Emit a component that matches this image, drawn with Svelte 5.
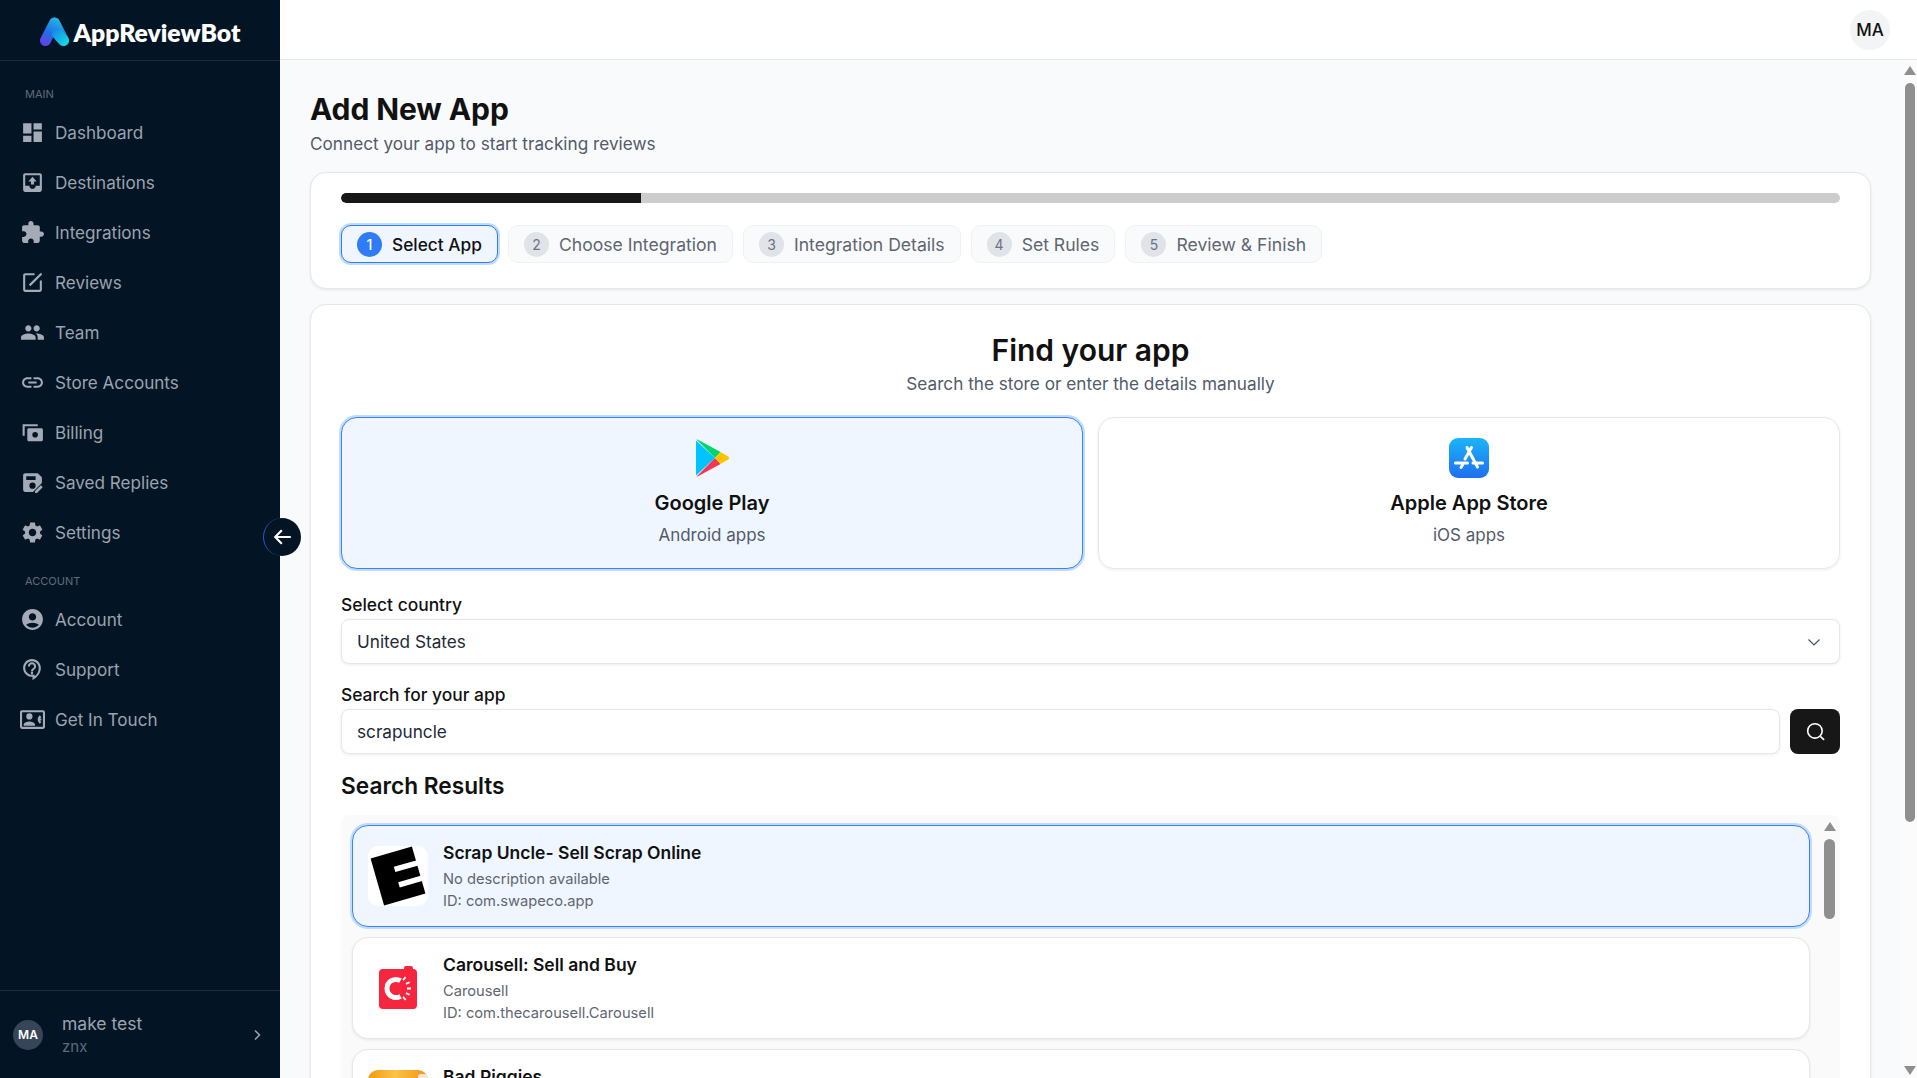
<script>
  const mainNav = [
    { label: 'Dashboard', icon: 'M3 13h8V3H3v10zm0 8h8v-6H3v6zm10 0h8V11h-8v10zm0-18v6h8V3h-8z' },
    { label: 'Destinations', icon: 'M19 3H5c-1.1 0-2 .9-2 2v14c0 1.1.9 2 2 2h14c1.1 0 2-.9 2-2V5c0-1.1-.9-2-2-2zM5 5h14v10h-4c0 1.66-1.34 3-3 3s-3-1.34-3-3H5V5zm7 1.5L8 11h2.5v3h3v-3H16l-4-4.500z' },
    { label: 'Integrations', icon: 'M20.500 11H19V7c0-1.100-.9-2-2-2h-4V3.500C13 2.120 11.880 1 10.500 1S8 2.120 8 3.500V5H4c-1.100 0-1.990.9-1.990 2v3.800H3.500c1.490 0 2.700 1.210 2.700 2.700s-1.210 2.700-2.700 2.700H2V20c0 1.100.9 2 2 2h3.800v-1.500c0-1.490 1.210-2.700 2.700-2.700 1.490 0 2.700 1.210 2.700 2.700V22H17c1.100 0 2-.9 2-2v-4h1.500c1.380 0 2.500-1.120 2.500-2.500S21.880 11 20.500 11z' },
    { label: 'Reviews', icon: 'M19 19H5V5h9V3H5c-1.110 0-2 .9-2 2v14c0 1.100.89 2 2 2h14c1.100 0 2-.9 2-2v-9h-2v9zM19.500 3l-11 11 1.500 1.500 11-11V3h-1.500z' },
    { label: 'Team', icon: 'M16 11c1.660 0 2.990-1.340 2.990-3S17.660 5 16 5c-1.660 0-3 1.340-3 3s1.340 3 3 3zm-8 0c1.660 0 2.990-1.340 2.990-3S9.660 5 8 5C6.340 5 5 6.340 5 8s1.340 3 3 3zm0 2c-2.330 0-7 1.170-7 3.500V19h14v-2.500c0-2.330-4.670-3.500-7-3.500zm8 0c-.29 0-.62.020-.97.050 1.160.84 1.970 1.970 1.970 3.450V19h6v-2.500c0-2.330-4.670-3.500-7-3.500z' },
    { label: 'Store Accounts', icon: 'M3.900 12c0-1.710 1.390-3.100 3.100-3.100h4V7H7c-2.760 0-5 2.240-5 5s2.240 5 5 5h4v-1.900H7c-1.710 0-3.100-1.390-3.100-3.100zM8 13h8v-2H8v2zm9-6h-4v1.900h4c1.710 0 3.100 1.390 3.100 3.100s-1.390 3.100-3.100 3.100h-4V17h4c2.760 0 5-2.240 5-5s-2.240-5-5-5z' },
    { label: 'Billing', icon: 'M2.500 4H17v2H4.500v9h-2V4zM8.500 8h12c.83 0 1.500.67 1.500 1.500V19c0 .83-.67 1.500-1.500 1.500h-12C7.670 20.500 7 19.830 7 19V9.500C7 8.670 7.670 8 8.500 8zm6 3.500a2.700 2.700 0 1 0 0 5.400 2.700 2.700 0 0 0 0-5.400z' },
    { label: 'Saved Replies', icon: 'M17 3H5c-1.100 0-2 .9-2 2v14c0 1.100.9 2 2 2h7.500l8.500-8.500V7l-4-4zM6 6h9v3.500H6V6zm6 12a3 3 0 1 1 0-6 3 3 0 0 1 0 6zM14.500 22v-1.800l5.500-5.500 1.800 1.800-5.500 5.500h-1.800z' },
    { label: 'Settings', icon: 'M19.140 12.940c.04-.3.06-.61.06-.94 0-.32-.02-.64-.07-.94l2.030-1.580c.18-.14.23-.41.12-.61l-1.920-3.320c-.12-.22-.37-.29-.59-.22l-2.390.96c-.5-.38-1.030-.7-1.620-.94l-.36-2.540c-.04-.24-.24-.41-.48-.41h-3.840c-.24 0-.43.17-.47.41l-.36 2.540c-.59.24-1.130.57-1.620.94l-2.390-.96c-.22-.08-.47 0-.59.22L2.740 8.870c-.12.21-.08.47.12.61l2.030 1.580c-.05.3-.09.63-.09.94s.02.64.07.94l-2.030 1.580c-.18.14-.23.41-.12.61l1.920 3.320c.12.22.37.29.59.22l2.390-.96c.5.38 1.030.7 1.620.94l.36 2.540c.05.24.24.41.48.41h3.840c.24 0 .44-.17.47-.41l.36-2.540c.59-.24 1.130-.56 1.620-.94l2.390.96c.22.08.47 0 .59-.22l1.920-3.320c.12-.22.07-.47-.12-.61l-2.010-1.580zM12 15.600c-1.980 0-3.600-1.620-3.600-3.600s1.620-3.600 3.600-3.600 3.600 1.620 3.600 3.600-1.620 3.600-3.600 3.600z' }
  ];

  const accountNav = [
    { label: 'Account', icon: 'M12 2C6.480 2 2 6.480 2 12s4.480 10 10 10 10-4.480 10-10S17.520 2 12 2zm0 4c1.930 0 3.500 1.570 3.500 3.500S13.930 13 12 13s-3.500-1.570-3.500-3.500S10.070 6 12 6zm0 14c-2.030 0-4.430-.82-6.140-2.880C7.550 15.800 9.680 15 12 15s4.450.8 6.140 2.120C16.430 19.180 14.030 20 12 20z' },
    { label: 'Support', icon: 'M11.500 2C6.810 2 3 5.810 3 10.500S6.810 19 11.500 19h.5v3c4.860-2.340 8-7 8-11.500C20 5.810 16.190 2 11.500 2zm2.500 16.550V17h-2.500C7.910 17 5 14.090 5 10.500S7.910 4 11.500 4 18 6.910 18 10.500c0 3.300-1.470 6.170-4 8.050zM10.500 14.500h2v2h-2v-2zm1-9.500C9.290 5 7.500 6.790 7.500 9h2c0-1.100.9-2 2-2s2 .9 2 2c0 2-3 1.750-3 5h2c0-2.250 3-2.500 3-5 0-2.210-1.790-4-4-4z' },
    { label: 'Get In Touch', icon: 'M22 3H2C.9 3 0 3.900 0 5v14c0 1.100.9 2 2 2h20c1.100 0 2-.9 2-2V5c0-1.100-.9-2-2-2zm0 16H2V5h20v14zM9 12a3 3 0 1 0 0-6 3 3 0 0 0 0 6zM3.500 18h11v-1c0-2-3.700-3.100-5.500-3.100S3.500 15 3.500 17v1zM19 8c-1.300 1.300-2 2.600-2 4s.7 2.700 2 4l1.500-1.500c-.7-.6-1-1.200-1.500-1.500h1.500v-2H19c.5-.3.800-.9 1.500-1.500L19 8z' }
  ];

  const steps = ['Select App', 'Choose Integration', 'Integration Details', 'Set Rules', 'Review & Finish'];
</script>

<div class="app">
  <aside class="sidebar">
    <div class="brand">
      <svg class="logo" viewBox="0 0 30 30" aria-hidden="true">
        <defs>
          <linearGradient id="lg1" gradientUnits="userSpaceOnUse" x1="4" y1="29" x2="17" y2="2">
            <stop offset="0" stop-color="#6a3be4" />
            <stop offset="0.5" stop-color="#1f72e6" />
            <stop offset="1" stop-color="#22b6e6" />
          </linearGradient>
          <linearGradient id="lg2" gradientUnits="userSpaceOnUse" x1="12" y1="12" x2="28" y2="28">
            <stop offset="0" stop-color="#1c7fe6" />
            <stop offset="1" stop-color="#10e2e0" />
          </linearGradient>
        </defs>
        <path d="M14.500 6 5.500 23.500M14.500 6l9 17.500" fill="none" stroke="url(#lg1)" stroke-width="11" stroke-linecap="round" />
        <path d="M17.500 17 23.500 23.500" fill="none" stroke="url(#lg2)" stroke-width="11" stroke-linecap="round" />
      </svg>
      <span class="brand-name">AppReviewBot</span>
    </div>

    <nav class="nav">
      <div class="nav-title">MAIN</div>
      {#each mainNav as item}
        <div class="nav-item">
          <svg class="nav-icon" viewBox="0 0 24 24" aria-hidden="true"><path d={item.icon} fill-rule="evenodd" /></svg>
          <span>{item.label}</span>
        </div>
      {/each}
      <div class="nav-title second">ACCOUNT</div>
      {#each accountNav as item}
        <div class="nav-item">
          <svg class="nav-icon" viewBox="0 0 24 24" aria-hidden="true"><path d={item.icon} fill-rule="evenodd" /></svg>
          <span>{item.label}</span>
        </div>
      {/each}
    </nav>

    <div class="user">
      <div class="user-avatar">MA</div>
      <div class="user-text">
        <div class="user-name">make test</div>
        <div class="user-org">znx</div>
      </div>
      <svg class="chev" viewBox="0 0 16 16" aria-hidden="true"><path d="M6 3.500 10.500 8 6 12.500" /></svg>
    </div>

    <button class="collapse" aria-label="Collapse sidebar">
      <svg viewBox="0 0 20 20" aria-hidden="true"><path d="M16.500 10h-13M9 4.300 3.500 10 9 15.700" /></svg>
    </button>
  </aside>

  <div class="right">
    <header class="topbar"><div class="top-avatar">MA</div></header>

    <div class="scroll-wrap">
      <main class="content">
        <h1>Add New App</h1>
        <p class="lead">Connect your app to start tracking reviews</p>

        <section class="card progress-card">
          <div class="bar"><div class="bar-fill" style="width: 20%"></div></div>
          <div class="steps">
            {#each steps as step, i}
              <div class="step" class:active={i === 0}>
                <span class="num">{i + 1}</span>
                <span>{step}</span>
              </div>
            {/each}
          </div>
        </section>

        <section class="card find-card">
          <h2>Find your app</h2>
          <p class="find-sub">Search the store or enter the details manually</p>

          <div class="platforms">
            <div class="platform selected">
              <svg class="platform-icon" viewBox="0 0 40 40" aria-hidden="true">
                <path d="M4 2.500v35L23 20z" fill="#00c3ff" />
                <path d="M4.500 1.500 23 20l5.500-6L6 1.800c-.6-.4-1.100-.4-1.500-.3z" fill="#00d56e" />
                <path d="M4.500 38.500 23 20l5.500 6L6 38.200c-.6.4-1.100.4-1.500.3z" fill="#f5364e" />
                <path d="m28.500 14 7.800 4.500c1 .6 1 2.400 0 3L28.500 26 23 20z" fill="#ffc400" />
              </svg>
              <div class="platform-name">Google Play</div>
              <div class="platform-sub">Android apps</div>
            </div>
            <div class="platform">
              <svg class="platform-icon" viewBox="0 0 40 40" aria-hidden="true">
                <defs>
                  <linearGradient id="as" x1="0" y1="0" x2="0" y2="1">
                    <stop offset="0" stop-color="#1cb4f8" />
                    <stop offset="1" stop-color="#1e6ff0" />
                  </linearGradient>
                </defs>
                <rect width="40" height="40" rx="9" fill="url(#as)" />
                <path d="M18 9.500 28.500 29M22.500 9.500 16 21M12 29.500l2-3.500M6.500 25h12M24 25h9.500" stroke="#fff" stroke-width="3" stroke-linecap="round" fill="none" />
              </svg>
              <div class="platform-name">Apple App Store</div>
              <div class="platform-sub">iOS apps</div>
            </div>
          </div>

          <div class="field-label first">Select country</div>
          <div class="input select">
            <span>United States</span>
            <svg viewBox="0 0 16 16" aria-hidden="true"><path d="M2.500 5.500 8 11l5.500-5.500" /></svg>
          </div>

          <div class="field-label">Search for your app</div>
          <div class="search-row">
            <div class="input grow">scrapuncle</div>
            <button class="search-btn" aria-label="Search">
              <svg viewBox="0 0 20 20" aria-hidden="true"><circle cx="9.500" cy="9.500" r="6.300" /><path d="m14.200 14.200 3.300 3" /></svg>
            </button>
          </div>

          <h3>Search Results</h3>

          <div class="results">
            <div class="result-list">
              <div class="result selected">
                <div class="app-icon">
                  <svg viewBox="0 0 60 60" aria-hidden="true">
                    <g transform="rotate(-16 30 30)">
                      <rect x="8.500" y="5.500" width="43" height="49" fill="#000" />
                      <rect x="28.500" y="20" width="25" height="5.500" fill="#fff" />
                      <rect x="28.500" y="36" width="25" height="5.500" fill="#fff" />
                    </g>
                  </svg>
                </div>
                <div class="result-text">
                  <div class="result-title">Scrap Uncle- Sell Scrap Online</div>
                  <div class="result-line">No description available</div>
                  <div class="result-line">ID: com.swapeco.app</div>
                </div>
              </div>
              <div class="result">
                <div class="app-icon">
                  <svg viewBox="0 0 60 60" aria-hidden="true">
                    <rect x="11" y="11" width="38" height="40" rx="4" fill="#f7263f" />
                    <rect x="36" y="8" width="9" height="7" rx="2" fill="#f7263f" />
                    <path d="M32.500 22.700a9 9 0 1 0 0 15.600" fill="none" stroke="#fff" stroke-width="5" />
                    <path d="M35.100 22.100l2.500-3.100M38 25.900l3.600-1.700M39 30.500h4M38 35.100l3.600 1.700M35.100 38.900l2.500 3.100" stroke="#fff" stroke-width="1.800" fill="none" />
                  </svg>
                </div>
                <div class="result-text">
                  <div class="result-title">Carousell: Sell and Buy</div>
                  <div class="result-line">Carousell</div>
                  <div class="result-line">ID: com.thecarousell.Carousell</div>
                </div>
              </div>
              <div class="result">
                <div class="app-icon piggies">
                  <svg viewBox="0 0 60 60" aria-hidden="true">
                    <rect x="50" y="4" width="10" height="12" rx="3" fill="#f6e2dc" />
                  </svg>
                </div>
                <div class="result-text">
                  <div class="result-title">Bad Piggies</div>
                  <div class="result-line">Rovio Entertainment</div>
                  <div class="result-line">ID: com.rovio.BadPiggies</div>
                </div>
              </div>
            </div>
            <div class="scrollbar small">
              <span class="arrow up"></span>
              <span class="thumb"></span>
            </div>
          </div>
        </section>
      </main>

      <div class="scrollbar page">
        <span class="arrow up"></span>
        <span class="thumb"></span>
        <span class="arrow down"></span>
      </div>
    </div>
  </div>
</div>

<style>
  :global(body) {
    margin: 0;
    overflow: hidden;
    font-family: Inter, "Liberation Sans", sans-serif;
    color: #111;
  }

  .app {
    display: flex;
    height: 1078px;
    overflow: hidden;
    background: #f9fafb;
  }

  /* sidebar */
  .sidebar {
    position: relative;
    flex: 0 0 280px;
    display: flex;
    flex-direction: column;
    background: #031525;
  }
  .brand {
    height: 61px;
    box-sizing: border-box;
    display: flex;
    align-items: center;
    justify-content: center;
    gap: 4px;
    padding: 5px 0 0 0;
    border-bottom: 1px solid #1d2b3a;
  }
  .logo {
    width: 30px;
    height: 30px;
    margin-top: -2px;
  }
  .brand-name {
    font-family: Lato, Inter, sans-serif;
    font-size: 24.700px;
    font-weight: 800;
    color: #fff;
  }
  .nav {
    flex: 1;
    padding-top: 25px;
  }
  .nav-title {
    padding-left: 25px;
    font-size: 11px;
    line-height: 16px;
    color: #626c78;
    margin-bottom: 5px;
  }
  .nav-title.second {
    margin-top: 16px;
    margin-bottom: 5px;
  }
  .nav-item {
    height: 50px;
    display: flex;
    align-items: center;
    padding-left: 20px;
    gap: 10px;
    font-size: 17.100px;
    color: #9ca3af;
  }
  .nav-icon {
    width: 25px;
    height: 25px;
    fill: #a4abb7;
    flex: none;
  }
  .user {
    height: 88px;
    box-sizing: border-box;
    border-top: 1px solid #1d2b3a;
    display: flex;
    align-items: center;
    padding: 1px 15px 0 13px;
    gap: 19px;
  }
  .user-avatar {
    width: 30px;
    height: 30px;
    margin-top: -1px;
    border-radius: 50%;
    background: #374559;
    color: #fff;
    font-size: 12px;
    font-weight: 600;
    display: flex;
    align-items: center;
    justify-content: center;
    flex: none;
  }
  .user-text {
    flex: 1;
  }
  .user-name {
    font-size: 17.500px;
    line-height: 24px;
    color: #9ca3af;
  }
  .user-org {
    font-size: 15px;
    line-height: 22px;
    color: #5f6b7a;
  }
  .chev {
    width: 16px;
    height: 16px;
    fill: none;
    stroke: #9ca3af;
    stroke-width: 1.500;
  }
  .collapse {
    position: absolute;
    top: 518px;
    left: 263px;
    width: 38px;
    height: 38px;
    padding: 0;
    border: 0;
    border-left: 1px solid #1d5fd0;
    border-radius: 50%;
    background: #031525;
    display: flex;
    align-items: center;
    justify-content: center;
    z-index: 2;
  }
  .collapse svg {
    width: 24px;
    height: 24px;
    fill: none;
    stroke: #fff;
    stroke-width: 1.800;
  }

  /* right side */
  .right {
    flex: 1;
    min-width: 0;
    display: flex;
    flex-direction: column;
  }
  .topbar {
    height: 60px;
    box-sizing: border-box;
    flex: none;
    background: #fff;
    border-bottom: 1px solid #e5e7eb;
    display: flex;
    align-items: center;
    justify-content: flex-end;
    padding-right: 27px;
  }
  .top-avatar {
    width: 40px;
    height: 40px;
    border-radius: 50%;
    background: #f3f4f6;
    display: flex;
    align-items: center;
    justify-content: center;
    font-size: 17px;
    font-weight: 500;
    color: #111;
  }
  .scroll-wrap {
    flex: 1;
    min-height: 0;
    display: flex;
    overflow: hidden;
  }
  .content {
    flex: 1;
    min-width: 0;
    padding: 30px;
  }
  h1 {
    margin: 0;
    font-size: 30px;
    line-height: 38px;
    font-weight: 700;
    letter-spacing: -0.1px;
    color: #111;
  }
  .lead {
    margin: 4px 0 16px;
    font-size: 17.200px;
    line-height: 24px;
    color: #525b6b;
  }
  .card {
    background: #fff;
    border: 1px solid #e5e7eb;
    border-radius: 16px;
    box-shadow: 0 1px 3px rgba(0, 0, 0, 0.08);
    padding: 0 30px;
  }
  .progress-card {
    height: 117px;
    box-sizing: border-box;
    padding-top: 20px;
  }
  .bar {
    height: 10px;
    border-radius: 5px;
    background: #cccccc;
    overflow: hidden;
  }
  .bar-fill {
    height: 100%;
    background: #171717;
    border-radius: 5px 0 0 5px;
  }
  .steps {
    display: flex;
    gap: 10px;
    margin-top: 22px;
  }
  .step {
    height: 38px;
    box-sizing: border-box;
    display: flex;
    align-items: center;
    gap: 10px;
    padding: 0 15px;
    border: 1px solid #f0f1f4;
    border-radius: 10px;
    background: #f9fafb;
    font-size: 17.600px;
    color: #5f6672;
  }
  .num {
    width: 25px;
    height: 25px;
    border-radius: 50%;
    background: #e0e3e8;
    color: #6b7280;
    font-size: 14px;
    display: flex;
    align-items: center;
    justify-content: center;
  }
  .step.active {
    border: 1px solid #2f7cf6;
    background: #eff6ff;
    color: #111;
    font-size: 17.300px;
    font-weight: 500;
    box-shadow: 0 0 0 2px #bfdbfe;
  }
  .step.active .num {
    background: #2f7cf6;
    color: #fff;
  }
  .find-card {
    margin-top: 15px;
    padding-top: 25px;
    height: 900px;
  }
  h2 {
    margin: 0;
    text-align: center;
    font-size: 30px;
    line-height: 40px;
    font-weight: 600;
    color: #111;
  }
  .find-sub {
    margin: 2px 0 0;
    text-align: center;
    font-size: 17.200px;
    line-height: 24px;
    color: #525b6b;
  }
  .platforms {
    display: grid;
    grid-template-columns: 1fr 1fr;
    gap: 15px;
    margin-top: 21px;
  }
  .platform {
    height: 152px;
    box-sizing: border-box;
    border: 1px solid #e5e7eb;
    border-radius: 16px;
    box-shadow: 0 1px 3px rgba(0, 0, 0, 0.08);
    display: flex;
    flex-direction: column;
    align-items: center;
    padding-top: 20px;
  }
  .platform.selected {
    border: 1px solid #3b82f6;
    background: #eff6ff;
    box-shadow: 0 0 0 2px #bfdbfe;
  }
  .platform-icon {
    width: 40px;
    height: 40px;
  }
  .platform-name {
    margin-top: 11px;
    font-size: 20px;
    line-height: 28px;
    font-weight: 600;
    color: #111;
  }
  .platform-sub {
    margin-top: 6px;
    font-size: 17px;
    line-height: 24px;
    color: #525b6b;
  }
  .field-label {
    margin-top: 19px;
    margin-bottom: 2px;
    font-size: 17.400px;
    line-height: 24px;
    font-weight: 500;
    color: #111;
  }
  .field-label.first {
    margin-top: 24px;
  }
  .input {
    height: 45px;
    box-sizing: border-box;
    border: 1px solid #e5e7eb;
    border-radius: 8px;
    background: #fff;
    box-shadow: 0 1px 3px rgba(0, 0, 0, 0.08);
    display: flex;
    align-items: center;
    padding: 0 15px;
    font-size: 17.200px;
    color: #1f2937;
  }
  .select {
    justify-content: space-between;
  }
  .select svg {
    width: 16px;
    height: 16px;
    margin-right: 2px;
    fill: none;
    stroke: #4b5563;
    stroke-width: 1.200;
  }
  .search-row {
    display: flex;
    gap: 10px;
    align-items: center;
  }
  .grow {
    flex: 1;
  }
  .search-btn {
    width: 50px;
    height: 45px;
    padding: 0;
    border: 0;
    border-radius: 8px;
    background: #171717;
    display: flex;
    align-items: center;
    justify-content: center;
  }
  .search-btn svg {
    width: 23px;
    height: 23px;
    fill: none;
    stroke: #fff;
    stroke-width: 1.400;
  }
  h3 {
    margin: 16px 0 0;
    font-size: 22.700px;
    line-height: 32px;
    font-weight: 600;
    color: #111;
  }
  .results {
    margin-top: 13px;
    height: 420px;
    display: flex;
    background: #fafafa;
    border-radius: 8px;
    padding: 10px 5px 0 11px;
  }
  .result-list {
    flex: 1;
    min-width: 0;
    display: flex;
    flex-direction: column;
    gap: 10px;
  }
  .result {
    height: 102px;
    box-sizing: border-box;
    flex: none;
    display: flex;
    align-items: center;
    gap: 15px;
    padding: 0 15px;
    background: #fff;
    border: 1px solid #e5e7eb;
    border-radius: 16px;
    box-shadow: 0 1px 3px rgba(0, 0, 0, 0.08);
  }
  .result.selected {
    border: 1px solid #3b82f6;
    background: #eff6ff;
    box-shadow: 0 0 0 2px #bfdbfe;
  }
  .app-icon {
    width: 60px;
    height: 60px;
    flex: none;
    border-radius: 10px;
    background: #fff;
    overflow: hidden;
  }
  .app-icon svg {
    display: block;
    width: 60px;
    height: 60px;
  }
  .app-icon.piggies {
    background: linear-gradient(90deg, #f29a10, #fbc24a 45%, #f0960c);
  }
  .result-title {
    font-size: 17.500px;
    line-height: 26px;
    font-weight: 600;
    color: #111;
  }
  .result-line {
    font-size: 14.700px;
    line-height: 22px;
    color: #5f6672;
  }
  .result-title + .result-line {
    margin-top: 2px;
  }

  /* scrollbars */
  .scrollbar {
    flex: none;
    display: flex;
    flex-direction: column;
    align-items: center;
  }
  .thumb {
    display: block;
    background: #8f8f8f;
    border-radius: 6px;
  }
  .arrow {
    display: block;
    width: 0;
    height: 0;
    border-left: 6px solid transparent;
    border-right: 6px solid transparent;
  }
  .arrow.up {
    border-bottom: 9px solid #8f8f8f;
  }
  .arrow.down {
    border-top: 9px solid #8f8f8f;
  }
  .page {
    width: 16px;
    padding: 6px 0 0 2px;
    height: 1018px;
    box-sizing: border-box;
    background: #fbfbfb;
  }
  .page .thumb {
    width: 10px;
    height: 739px;
    margin-top: 8px;
    margin-bottom: auto;
  }
  .page .arrow.down {
    margin-bottom: 3px;
  }
  .small {
    width: 11px;
    margin-left: 14px;
    margin-top: -3px;
  }
  .small .thumb {
    width: 11px;
    height: 80px;
    margin-top: 8px;
  }
</style>
